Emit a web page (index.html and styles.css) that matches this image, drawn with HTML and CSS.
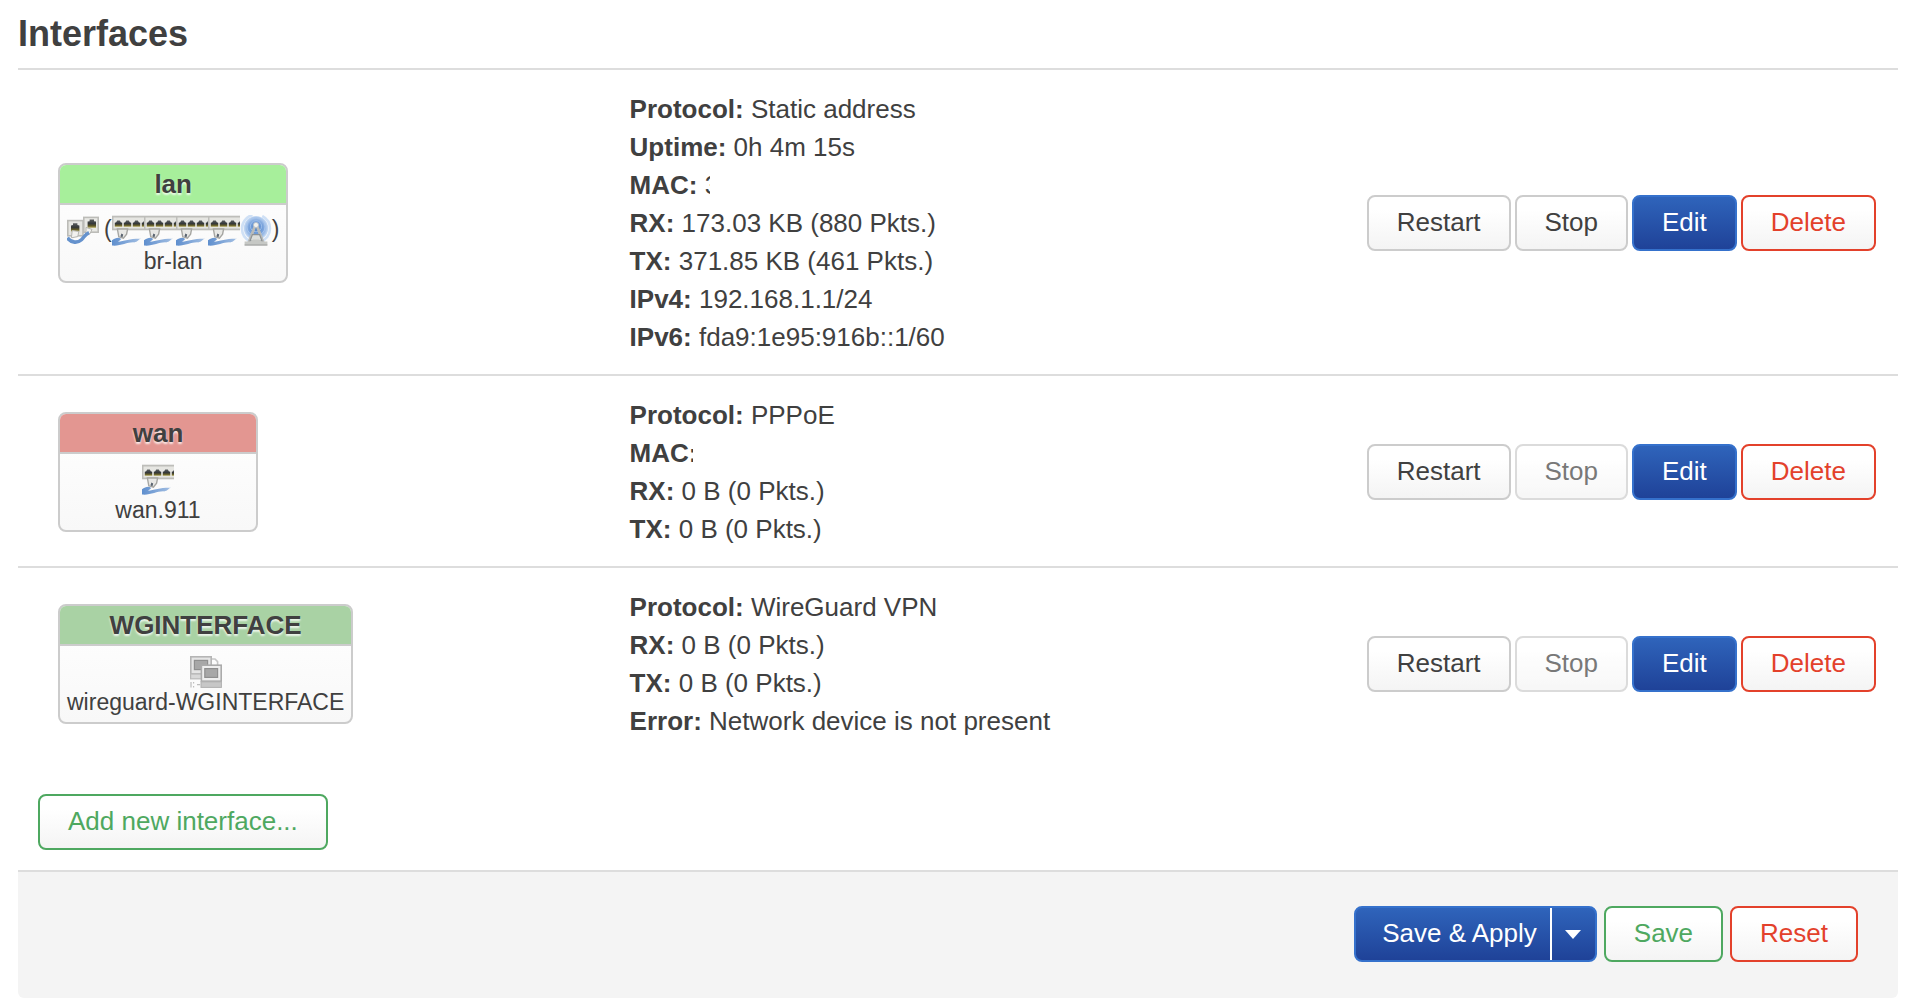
FILE: index.html
```
<!DOCTYPE html>
<html lang="en">

<head>
    <meta charset="UTF-8">
    <meta name="viewport" content="width=device-width, initial-scale=1.0">
    <title>Interfaces</title>
    <link rel="stylesheet" href="styles.css">
</head>

<body>
    <!-- device icons, 16x16 grid -->
    <svg class="sprite" aria-hidden="true">
        <linearGradient id="cable" x1="0" x2="1" y1="0" y2="0">
            <stop offset="0" stop-color="#5f8fce"/>
            <stop offset="1" stop-color="#a3bfe3"/>
        </linearGradient>
        <linearGradient id="socket" x1="0" x2="0" y1="0" y2="1">
            <stop offset="0" stop-color="#5a5d5e"/>
            <stop offset=".5" stop-color="#34383a"/>
            <stop offset=".75" stop-color="#5c5628"/>
            <stop offset="1" stop-color="#b0a655"/>
        </linearGradient>
        <radialGradient id="waves">
            <stop offset="0" stop-color="#4d82c8"/>
            <stop offset=".6" stop-color="#7ba4dc"/>
            <stop offset="1" stop-color="#c9dcf4"/>
        </radialGradient>
        <symbol id="icon-bridge" viewBox="0 0 16 16">
            <rect x=".4" y="2.8" width="7.6" height="7.6" fill="#e6e6e2" stroke="#bcbcb8" stroke-width=".8"/>
            <rect x="8.4" y="1.2" width="7.2" height="7.4" fill="#e9e9e5" stroke="#bcbcb8" stroke-width=".8"/>
            <path d="M2 8.2V5.2l1-.2v-.9h2.2V5l1 .2v3z" fill="url(#socket)"/>
            <path d="M10.3 6.4V3.3l1-.2v-.9h2.2v.9l1 .2v3.1z" fill="url(#socket)"/>
            <path d="M2.6 7.8l3.3.4-.5 2.6-3.2.6zM9.5 6.2l3 1-1 2.2-2 .2z" fill="#f2f2ef" stroke="#b5b5b1" stroke-width=".5"/>
            <path d="M.2 11.4c2 2.8 5.3 2.6 7 1 1.5-1.5 1.8-2.7 3.8-3.6" fill="none" stroke="#6592cd" stroke-width="1.8"/>
        </symbol>
        <symbol id="icon-switch" viewBox="0 0 16 16">
            <rect x=".3" y=".8" width="17" height="6.4" fill="#e6e6e2" stroke="#bebeba" stroke-width=".9"/>
            <path id="port" d="M1.4 5.9V3.9l.7-.3.5-.9h1.3l.5.9.7.3v2z" fill="url(#socket)"/>
            <use href="#port" x="4.5"/>
            <use href="#port" x="9"/>
            <use href="#port" x="13.5"/>
            <path d="M2.7 7h5.1l-.5 2.6-1.6 2-2.3-.7z" fill="#e8e8e5" stroke="#a6a6a2" stroke-width=".7"/>
            <path d="M4.2 10.6l.5-1.4.9.6-.4 1.4z" fill="#59636f"/>
            <path d="M0 12.6c1.4-1.2 3.5-1.6 4.3-.9.6.8-1 1.1-1.2 1.7 2.8-.5 6.8-1.7 11.5-1.5-1.8.4-1.5 1.6-3.6 1.8-3.4-.2-6.6 2-11 1.6z" fill="url(#cable)"/>
        </symbol>
        <symbol id="icon-wifi" viewBox="0 0 16 16">
            <circle cx="8" cy="6.8" r="7" fill="none" stroke="#cfe0f5" stroke-width="1.3" stroke-dasharray="17 5" stroke-dashoffset="8"/>
            <circle cx="8" cy="6.6" r="6.1" fill="url(#waves)"/>
            <circle cx="8" cy="5.8" r="4.6" fill="none" stroke="#a9c6ec" stroke-width=".5"/>
            <circle cx="8" cy="5.6" r="2.8" fill="none" stroke="#9bbce8" stroke-width=".5"/>
            <path d="M7.3 6L4.2 14.3M8.7 6l3.1 8.3" stroke="#b9bbb9" stroke-width="1.4"/>
            <path d="M6.2 9.8h3.6L11 13H5z" fill="#dcdedb" stroke="#8e9395" stroke-width=".6"/>
            <circle cx="8" cy="5" r="1.3" fill="#f0f0ed" stroke="#b8bec5" stroke-width=".4"/>
            <path d="M2.3 13.2h2.9l1.3-.9h3l1.3.9h2.9v2H2.3z" fill="#c6c8c5"/>
            <path d="M2.3 15h11.4" stroke="#9c9e9c" stroke-width=".5"/>
        </symbol>
        <symbol id="icon-tunnel" viewBox="0 0 16 16">
            <path d="M10 1.5h2.5l1.3 1.3V5" fill="none" stroke="#c6c6c6" stroke-width=".8"/>
            <rect x=".4" y=".4" width="10.2" height="8.6" fill="#e5e5e5" stroke="#b5b5b5" stroke-width=".8"/>
            <rect x="2.2" y="2.2" width="6.6" height="4.6" fill="#a7a7a7" stroke="#8f8f8f" stroke-width=".6"/>
            <rect x=".3" y="9" width="6" height="2.4" fill="#d8d8d8" stroke="#bababa" stroke-width=".6"/>
            <rect x="5.7" y="4.6" width="9.9" height="8" fill="#eeeeee" stroke="#ababab" stroke-width=".8"/>
            <rect x="7.4" y="6.3" width="6.4" height="4.4" fill="#a7a7a7" stroke="#8f8f8f" stroke-width=".6"/>
            <rect x="5.5" y="12.9" width="10.2" height="2.8" fill="#c7c7c7" stroke="#b0b0b0" stroke-width=".5"/>
            <path d="M.5 13v2.7M1.8 13v.8M1.8 15v.7M3.5 14.3h1.6" stroke="#bdbdbd" stroke-width=".6"/>
        </symbol>
    </svg>

    <h3>Interfaces</h3>

    <table class="interfaces">
        <tr>
            <td class="col-name">
                <div class="ifacebox">
                    <div class="ifacebox-head lan">lan</div>
                    <div class="ifacebox-body">
                        <div class="icons">
                            <svg><use href="#icon-bridge"/></svg>
                            <span class="ports">(<svg><use href="#icon-switch"/></svg><svg><use href="#icon-switch"/></svg><svg><use href="#icon-switch"/></svg><svg><use href="#icon-switch"/></svg><svg><use href="#icon-wifi"/></svg>)</span>
                        </div>
                        br-lan
                    </div>
                </div>
            </td>
            <td class="col-info">
                <strong>Protocol:</strong> Static address<br>
                <strong>Uptime:</strong> 0h 4m 15s<br>
                <strong>MAC:</strong> <span class="hidden-mac">3</span><br>
                <strong>RX:</strong> 173.03 KB (880 Pkts.)<br>
                <strong>TX:</strong> 371.85 KB (461 Pkts.)<br>
                <strong>IPv4:</strong> 192.168.1.1/24<br>
                <strong>IPv6:</strong> fda9:1e95:916b::1/60
            </td>
            <td class="col-actions">
                <div class="actions">
                    <button class="btn">Restart</button>
                    <button class="btn">Stop</button>
                    <button class="btn primary">Edit</button>
                    <button class="btn negative">Delete</button>
                </div>
            </td>
        </tr>
        <tr>
            <td class="col-name">
                <div class="ifacebox">
                    <div class="ifacebox-head wan">wan</div>
                    <div class="ifacebox-body">
                        <div class="icons"><svg><use href="#icon-switch"/></svg></div>
                        wan.911
                    </div>
                </div>
            </td>
            <td class="col-info">
                <strong>Protocol:</strong> PPPoE<br>
                <strong>MAC<span class="hidden-mac colon">:</span></strong><br>
                <strong>RX:</strong> 0 B (0 Pkts.)<br>
                <strong>TX:</strong> 0 B (0 Pkts.)
            </td>
            <td class="col-actions">
                <div class="actions">
                    <button class="btn">Restart</button>
                    <button class="btn" disabled>Stop</button>
                    <button class="btn primary">Edit</button>
                    <button class="btn negative">Delete</button>
                </div>
            </td>
        </tr>
        <tr>
            <td class="col-name">
                <div class="ifacebox">
                    <div class="ifacebox-head vpn">WGINTERFACE</div>
                    <div class="ifacebox-body">
                        <div class="icons"><svg><use href="#icon-tunnel"/></svg></div>
                        wireguard-WGINTERFACE
                    </div>
                </div>
            </td>
            <td class="col-info">
                <strong>Protocol:</strong> WireGuard VPN<br>
                <strong>RX:</strong> 0 B (0 Pkts.)<br>
                <strong>TX:</strong> 0 B (0 Pkts.)<br>
                <strong>Error:</strong> Network device is not present
            </td>
            <td class="col-actions">
                <div class="actions">
                    <button class="btn">Restart</button>
                    <button class="btn" disabled>Stop</button>
                    <button class="btn primary">Edit</button>
                    <button class="btn negative">Delete</button>
                </div>
            </td>
        </tr>
    </table>

    <div class="create">
        <button class="btn positive">Add new interface...</button>
    </div>

    <div class="page-actions">
        <div class="split">
            <button class="split-main">Save &amp; Apply</button>
            <button class="split-toggle" aria-label="More apply options"></button>
        </div>
        <button class="btn positive">Save</button>
        <button class="btn negative">Reset</button>
    </div>
</body>

</html>
```

FILE: styles.css
```
* {
    box-sizing: border-box;
}

body {
    margin: 0;
    padding: 0 26px 10px 18px;
    background: #fff;
    color: #404040;
    font-family: "Liberation Sans", Arial, sans-serif;
    font-size: 26px;
    line-height: 38px;
}

.sprite {
    position: absolute;
    width: 0;
    height: 0;
}

h3 {
    margin: 0;
    padding: 15px 0;
    font-size: 36px;
}

.interfaces {
    width: 100%;
    border-collapse: separate;
    border-spacing: 0;
}

.interfaces td {
    padding: 20px 10px 18px;
    border-top: 2px solid #ddd;
    vertical-align: middle;
}

.interfaces .col-name {
    width: 32%;
    padding-left: 40px;
}

.interfaces .col-actions {
    padding-right: 22px;
}

.hidden-mac {
    display: inline-block;
    width: 5px;
    overflow: hidden;
    vertical-align: top;
}

.hidden-mac.colon {
    width: 4px;
}

/* interface badge */
.ifacebox {
    display: inline-block;
    min-width: 200px;
    border: 2px solid #ccc;
    border-radius: 8px;
    background: linear-gradient(#fff, #f8f8f8);
    text-align: center;
    vertical-align: middle;
    overflow: hidden;
}

.ifacebox-head {
    height: 40px;
    border-bottom: 2px solid #ccc;
    font-weight: bold;
    text-shadow: 0 2px 2px rgba(255, 255, 255, .8);
}

.lan {
    background: #a7ef9b;
}

.wan {
    background: #e39691;
}

.vpn {
    background: #a9d2a4;
}

.ifacebox-body {
    padding: 10px 7px 6px;
    font-size: 23px;
    line-height: 28px;
}

.icons,
.ports {
    display: flex;
    justify-content: center;
}

.icons {
    gap: 5px;
}

.icons svg {
    width: 32px;
    height: 32px;
}

/* buttons */
.btn {
    padding: 7px 28px 9px;
    border: 2px solid #ccc;
    border-radius: 8px;
    background: linear-gradient(#fff, #fff 25%, #f4f4f4);
    color: #404040;
    font: inherit;
    line-height: 36px;
    white-space: nowrap;
    cursor: pointer;
}

.btn:disabled {
    opacity: .7;
    cursor: default;
}

.primary,
.split {
    border-color: #3571cc;
    background: linear-gradient(#2f64bb, #1f4298);
    color: #fff;
}

.positive {
    border-color: #4ea860;
    color: #4ea860;
}

.negative {
    border-color: #e3412b;
    color: #e3412b;
}

.actions {
    display: flex;
    justify-content: flex-end;
    gap: 4px;
}

.create {
    padding: 36px 20px 20px;
}

.create .btn {
    display: block;
}

.page-actions {
    display: flex;
    justify-content: flex-end;
    gap: 7px;
    padding: 34px 40px 36px;
    border-top: 2px solid #ddd;
    border-radius: 0 0 6px 6px;
    background: #f4f4f4;
}

.split {
    display: flex;
    border-width: 2px;
    border-style: solid;
    border-radius: 8px;
}

.split button {
    border: 0;
    background: none;
    color: #fff;
    font: inherit;
    cursor: pointer;
}

.split .split-main {
    padding: 7px 13px 9px 26px;
    line-height: 36px;
}

.split .split-toggle {
    display: flex;
    align-items: center;
    justify-content: center;
    width: 45px;
    padding: 0;
    border-left: 2px solid #fff;
}

.split-toggle::before {
    content: "";
    border: 8px solid transparent;
    border-top: 9px solid #fff;
    border-bottom: 0;
}
```
